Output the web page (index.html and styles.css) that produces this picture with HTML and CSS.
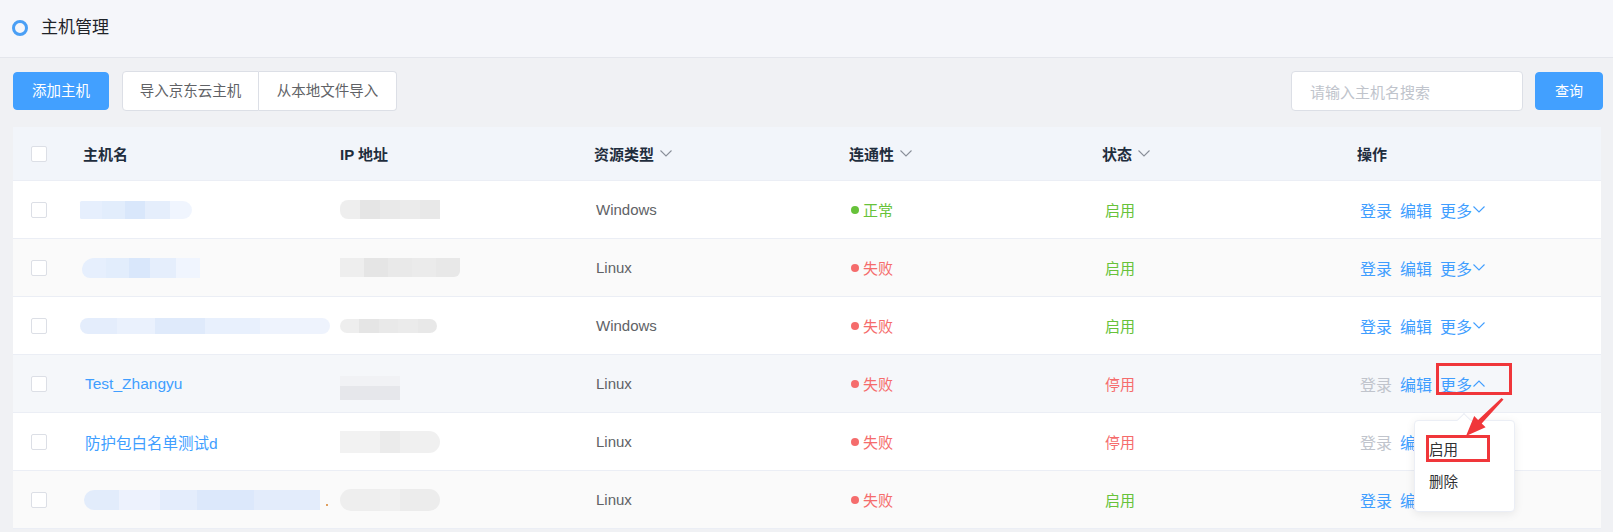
FILE: index.html
```html
<!DOCTYPE html>
<html lang="zh-CN">
<head>
<meta charset="utf-8">
<title>主机管理</title>
<link rel="stylesheet" href="styles.css">
</head>
<body>
<header class="titlebar">
  <span class="title-icon"></span>
  <h1 class="title">主机管理</h1>
</header>

<section class="toolbar">
  <div class="toolbar-left">
    <button class="btn btn-primary btn-add">添加主机</button>
    <div class="btn-group">
      <button class="btn btn-plain btn-g1">导入京东云主机</button>
      <button class="btn btn-plain btn-g2">从本地文件导入</button>
    </div>
  </div>
  <div class="toolbar-right">
    <div class="search">请输入主机名搜索</div>
    <button class="btn btn-primary btn-query">查询</button>
  </div>
</section>

<section class="table">
  <div class="row head">
    <div class="cell cell-check"><span class="checkbox"></span></div>
    <div class="cell">主机名</div>
    <div class="cell">IP 地址</div>
    <div class="cell">资源类型<svg class="sort" viewBox="0 0 12 7"><polyline points="0.5,0.5 6,6 11.5,0.5"/></svg></div>
    <div class="cell">连通性<svg class="sort" viewBox="0 0 12 7"><polyline points="0.5,0.5 6,6 11.5,0.5"/></svg></div>
    <div class="cell">状态<svg class="sort" viewBox="0 0 12 7"><polyline points="0.5,0.5 6,6 11.5,0.5"/></svg></div>
    <div class="cell">操作</div>
  </div>

  <div class="row">
    <div class="cell cell-check"><span class="checkbox"></span></div>
    <div class="cell cell-name"><span class="blur blur-n blur-n1"></span></div>
    <div class="cell"><span class="blur blur-ip blur-ip1"></span></div>
    <div class="cell text">Windows</div>
    <div class="cell"><span class="dot ok"></span><span class="ok-text">正常</span></div>
    <div class="cell on">启用</div>
    <div class="cell ops"><a class="op">登录</a><a class="op">编辑</a><a class="op">更多<svg class="more" viewBox="0 0 12 7"><polyline points="0.5,0.5 6,6 11.5,0.5"/></svg></a></div>
  </div>

  <div class="row stripe">
    <div class="cell cell-check"><span class="checkbox"></span></div>
    <div class="cell cell-name"><span class="blur blur-n blur-n2"></span></div>
    <div class="cell"><span class="blur blur-ip blur-ip2"></span></div>
    <div class="cell text">Linux</div>
    <div class="cell"><span class="dot fail"></span><span class="fail-text">失败</span></div>
    <div class="cell on">启用</div>
    <div class="cell ops"><a class="op">登录</a><a class="op">编辑</a><a class="op">更多<svg class="more" viewBox="0 0 12 7"><polyline points="0.5,0.5 6,6 11.5,0.5"/></svg></a></div>
  </div>

  <div class="row">
    <div class="cell cell-check"><span class="checkbox"></span></div>
    <div class="cell cell-name"><span class="blur blur-n blur-n3"></span></div>
    <div class="cell"><span class="blur blur-ip blur-ip3"></span></div>
    <div class="cell text">Windows</div>
    <div class="cell"><span class="dot fail"></span><span class="fail-text">失败</span></div>
    <div class="cell on">启用</div>
    <div class="cell ops"><a class="op">登录</a><a class="op">编辑</a><a class="op">更多<svg class="more" viewBox="0 0 12 7"><polyline points="0.5,0.5 6,6 11.5,0.5"/></svg></a></div>
  </div>

  <div class="row hover">
    <div class="cell cell-check"><span class="checkbox"></span></div>
    <div class="cell cell-name"><a class="name-link">Test_Zhangyu</a></div>
    <div class="cell"><span class="blur blur-ip blur-ip4"></span></div>
    <div class="cell text">Linux</div>
    <div class="cell"><span class="dot fail"></span><span class="fail-text">失败</span></div>
    <div class="cell off">停用</div>
    <div class="cell ops"><a class="op disabled">登录</a><a class="op">编辑</a><a class="op">更多<svg class="more" viewBox="0 0 12 7"><polyline points="0.5,6.5 6,1 11.5,6.5"/></svg></a></div>
  </div>

  <div class="row">
    <div class="cell cell-check"><span class="checkbox"></span></div>
    <div class="cell cell-name"><a class="name-link">防护包白名单测试d</a></div>
    <div class="cell"><span class="blur blur-ip blur-ip5"></span></div>
    <div class="cell text">Linux</div>
    <div class="cell"><span class="dot fail"></span><span class="fail-text">失败</span></div>
    <div class="cell off">停用</div>
    <div class="cell ops"><a class="op disabled">登录</a><a class="op">编辑</a><a class="op">更多<svg class="more" viewBox="0 0 12 7"><polyline points="0.5,0.5 6,6 11.5,0.5"/></svg></a></div>
  </div>

  <div class="row stripe">
    <div class="cell cell-check"><span class="checkbox"></span></div>
    <div class="cell cell-name"><span class="blur blur-n blur-n6"></span><span class="speck"></span></div>
    <div class="cell"><span class="blur blur-ip blur-ip6"></span></div>
    <div class="cell text">Linux</div>
    <div class="cell"><span class="dot fail"></span><span class="fail-text">失败</span></div>
    <div class="cell on">启用</div>
    <div class="cell ops"><a class="op">登录</a><a class="op">编辑</a><a class="op">更多<svg class="more" viewBox="0 0 12 7"><polyline points="0.5,0.5 6,6 11.5,0.5"/></svg></a></div>
  </div>
</section>

<div class="dropdown">
  <span class="dropdown-arrow"></span>
  <div class="dropdown-item">启用</div>
  <div class="dropdown-item">删除</div>
</div>

<div class="mark mark-more"></div>
<div class="mark mark-item"></div>
<svg class="mark-arrow" viewBox="0 0 42 40">
  <polygon points="38.5,0 40.5,1.5 18.7,25.4 22.6,29.3 3,38 11.2,18.1 15.1,21.9"/>
</svg>
</body>
</html>
```

FILE: styles.css
```css
* { box-sizing: border-box; }

html, body {
  margin: 0;
  padding: 0;
}

body {
  width: 1613px;
  height: 532px;
  overflow: hidden;
  background: #f0f1f4;
  font-family: "Liberation Sans", "Noto Sans CJK SC", sans-serif;
  color: #606266;
  position: relative;
}

/* title bar */
.titlebar {
  height: 58px;
  background: #f5f6fa;
  border-bottom: 1px solid #e4e6ec;
  display: flex;
  align-items: center;
  padding-left: 12px;
  padding-bottom: 1px;
}

.title-icon {
  width: 16px;
  height: 16px;
  border-radius: 50%;
  border: 3px solid #4a9ff5;
  margin-right: 13px;
}

.title {
  margin: 0;
  font-size: 17px;
  font-weight: normal;
  color: #1f2329;
  line-height: 20px;
}

/* toolbar */
.toolbar {
  display: flex;
  justify-content: space-between;
  align-items: center;
  margin-top: 13px;
  padding: 0 10px 0 13px;
  height: 40px;
}

.toolbar-left, .toolbar-right {
  display: flex;
  align-items: center;
}

.btn {
  font-family: "Liberation Sans", "Noto Sans CJK SC", sans-serif;
  font-size: 14.5px;
  border-radius: 4px;
  cursor: pointer;
  padding: 0;
  line-height: 1;
}

.btn-primary {
  background: #42a0ff;
  border: 1px solid #42a0ff;
  color: #fff;
  height: 38px;
}

.btn-add { width: 96px; }
.btn-query { width: 68px; margin-left: 12px; font-size: 14px; }

.btn-group {
  display: flex;
  margin-left: 13px;
  height: 40px;
}

.btn-plain {
  background: #fff;
  border: 1px solid #dcdfe6;
  color: #606266;
  height: 40px;
}

.btn-g1 {
  width: 137px;
  border-radius: 4px 0 0 4px;
}

.btn-g2 {
  width: 138px;
  border-left: none;
  border-radius: 0 4px 4px 0;
}

.search {
  width: 232px;
  height: 40px;
  background: #fff;
  border: 1px solid #dcdfe6;
  border-radius: 4px;
  padding-left: 18px;
  display: flex;
  align-items: center;
  font-size: 15px;
  color: #c0c4cc;
}

/* table */
.table {
  margin: 16px 12px 0 13px;
  background: #fff;
}

.row {
  display: grid;
  grid-template-columns: 60px 257px 254px 255px 253px 255px 1fr;
  height: 58px;
  border-bottom: 1px solid #ebeef5;
  background: #fff;
}

.row.head {
  height: 54px;
  background: #f2f5fa;
  font-size: 16px;
  font-weight: bold;
  color: #1f2d3d;
}

.row.stripe { background: #fafafa; }
.row.hover { background: #f5f7fa; }

.cell {
  display: flex;
  align-items: center;
  padding-left: 10px;
  font-size: 15px;
  white-space: nowrap;
}

.cell-check { padding-left: 18px; }

.checkbox {
  width: 16px;
  height: 16px;
  border: 1px solid #dcdfe6;
  border-radius: 2px;
  background: #fff;
}

.sort {
  width: 12px;
  height: 7px;
  margin-left: 6px;
  fill: none;
  stroke: #8a8f99;
  stroke-width: 1.1;
}

.text { color: #606266; padding-left: 12px; }

.dot {
  width: 8px;
  height: 8px;
  border-radius: 50%;
  margin: 0 4px 0 2px;
}

.dot.ok { background: #67c23a; }
.dot.fail { background: #f56c6c; }
.ok-text { color: #67c23a; }
.fail-text { color: #f56c6c; }

.on { color: #67c23a; padding-left: 13px; }
.off { color: #f56c6c; padding-left: 13px; }

.ops { padding-left: 13px; }

.op {
  color: #409eff;
  font-size: 16px;
  margin-right: 8px;
  display: flex;
  align-items: center;
}

.op.disabled { color: #c0c4cc; }

.more {
  width: 12px;
  height: 7px;
  margin-left: 1px;
  fill: none;
  stroke: #409eff;
  stroke-width: 1.1;
}

.name-link {
  color: #409eff;
  font-size: 15.5px;
  padding-left: 2px;
}

/* blurred (redacted) values */
.blur {
  display: block;
  height: 18px;
}

.blur-n {
  background: linear-gradient(90deg, #e6effd 0 20%, #e2edfc 20% 40%, #d9e7fb 40% 58%, #e5eefc 58% 80%, #f0f5fe 80% 100%);
  border-radius: 2px 12px 12px 2px;
}

.blur-n1 { width: 112px; margin-left: -3px; }
.blur-n2 { width: 118px; height: 20px; margin-left: -1px; border-radius: 12px 0 0 8px; }
.blur-n3 { width: 250px; height: 16px; margin-left: -3px; border-radius: 10px; background: linear-gradient(90deg, #e4edfc 0 15%, #eaf1fd 15% 30%, #dfeafb 30% 50%, #e8f0fd 50% 72%, #eef3fd 72% 100%); }
.blur-n6 { width: 236px; height: 20px; margin-left: 1px; border-radius: 10px 0 0 10px; background: linear-gradient(90deg, #e2ecfb 0 15%, #edf2fd 15% 32%, #e4edfc 32% 48%, #dce8fb 48% 72%, #e3ecfb 72% 100%); }

.speck {
  width: 2px;
  height: 2px;
  background: #e0a060;
  margin-left: 6px;
  margin-top: 10px;
}

.blur-ip {
  background: linear-gradient(90deg, #eeeeee 0 20%, #e5e5e5 20% 40%, #e9e9e9 40% 60%, #ebebeb 60% 80%, #e8e8e8 80% 100%);
  margin-left: 0;
  border-radius: 8px 0 0 8px;
  height: 19px;
}

.blur-ip1 { width: 100px; }
.blur-ip2 { width: 120px; border-radius: 0 0 6px 0; }
.blur-ip3 { width: 97px; height: 14px; border-radius: 7px; }
.blur-ip4 { width: 60px; height: 24px; border-radius: 0; margin-top: 8px; background: linear-gradient(180deg, #f1f2f5 0 40%, #e6e7eb 40% 100%); }
.blur-ip5 { width: 100px; height: 22px; border-radius: 0 11px 11px 0; background: linear-gradient(90deg, #f2f2f2 0 40%, #ebebeb 40% 60%, #f0f0f0 60% 100%); }
.blur-ip6 { width: 100px; height: 22px; border-radius: 11px; background: linear-gradient(90deg, #eeeeee 0 40%, #f0f0f0 40% 60%, #ececec 60% 100%); }

/* dropdown overlay */
.dropdown {
  position: absolute;
  left: 1414px;
  top: 420px;
  width: 101px;
  height: 92px;
  background: #fff;
  border: 1px solid #ebeef5;
  border-radius: 4px;
  box-shadow: 0 2px 10px rgba(0, 0, 0, 0.08);
  padding-top: 13px;
}

.dropdown-arrow {
  position: absolute;
  top: -6px;
  left: 44px;
  width: 10px;
  height: 10px;
  background: #fff;
  border-top: 1px solid #ebeef5;
  border-left: 1px solid #ebeef5;
  transform: rotate(45deg);
}

.dropdown-item {
  font-size: 14.5px;
  color: #303133;
  height: 32px;
  line-height: 32px;
  padding-left: 14px;
}

/* red annotations */
.mark {
  position: absolute;
  border: 3px solid #f0363a;
}

.mark-more {
  left: 1436px;
  top: 363px;
  width: 76px;
  height: 32px;
}

.mark-item {
  left: 1426px;
  top: 435px;
  width: 64px;
  height: 27px;
}

.mark-arrow {
  position: absolute;
  left: 1463px;
  top: 398px;
  width: 42px;
  height: 40px;
  fill: #f0363a;
}
```
